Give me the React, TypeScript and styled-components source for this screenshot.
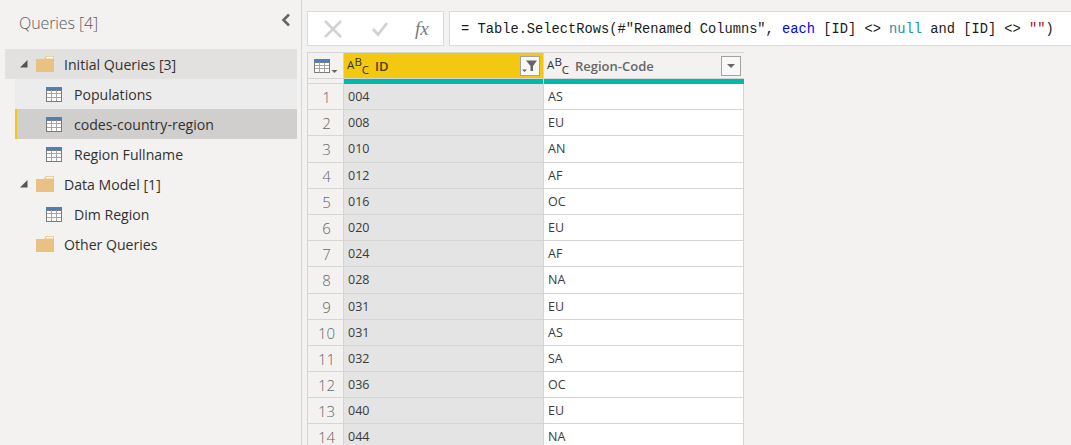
import React from "react";
import styled, { createGlobalStyle } from "styled-components";

const Global = createGlobalStyle`
  html, body { margin: 0; padding: 0; height: 445px; overflow: hidden; background: #f3f2f1; }
  * { box-sizing: border-box; }
`;
const UI = `"Open Sans", "Noto Sans", sans-serif`;
const COLS = "36px 200px 200px";

const Page = styled.div`
  display: flex; width: 1071px; height: 445px; overflow: hidden;
  background: #f3f2f1; font-family: ${UI}; color: #323130;
`;
const Sidebar = styled.aside`
  width: 302px; flex: none; border-right: 1px solid #d6d5d4; padding: 0 4px 0 5px;
`;
const SideHead = styled.div`
  height: 49px; display: flex; justify-content: space-between; padding: 12px 6px 0 14px;
`;
const SideTitle = styled.div`
  font-size: 16px; line-height: 22px; font-weight: 300; color: #605e5c; letter-spacing: -0.1px;
`;
const Row = styled.div<{ $child?: boolean; $tone?: "group" | "hover" | "selected" }>`
  height: 30px; display: flex; align-items: center; position: relative;
  margin-left: ${p => (p.$child ? "10px" : "0")};
  padding-left: ${p => (p.$child ? "31px" : "14px")};
  background: ${p =>
    p.$tone === "group" ? "#e2e1e0" : p.$tone === "hover" ? "#edecec" : p.$tone === "selected" ? "#d0cfce" : "transparent"};
  border-left: ${p => (p.$tone === "selected" ? "2px solid #f2c811" : "0")};
  ${p => p.$tone === "selected" && "padding-left: 29px;"}
`;
const Caret = styled.svg`width: 8px; height: 8px; flex: none; margin: 0 8px 0 1px;`;
const CaretGap = styled.span`width: 17px; flex: none;`;
const RowLabel = styled.span<{ $child?: boolean }>`
  font-size: 14.1px; line-height: 18px; white-space: nowrap; color: #323130; padding-top: 1px;
  margin-left: ${p => (p.$child ? "12px" : "10px")};
`;
const Main = styled.main`
  flex: 1; min-width: 0; padding: 11px 0 0 5px; display: flex; flex-direction: column; gap: 6px;
`;
const FormulaRow = styled.div`display: flex; gap: 5px; height: 35px; flex: none;`;
const Tools = styled.div`
  width: 137px; flex: none; background: #fff; border: 1px solid #dcdbda;
  display: flex; align-items: center; padding-left: 15px;
`;
const ToolSlot = styled.span<{ $w: number }>`width: ${p => p.$w}px; display: flex; align-items: center;`;
const Fx = styled.span`
  font-family: "Liberation Serif", serif; font-style: italic; font-size: 19px; color: #7a7a7a; line-height: 1;
`;
const Formula = styled.div`
  flex: 1; background: #fff; border: solid #dcdbda; border-width: 1px 0 1px 1px; padding-left: 11px;
  font-family: "Liberation Mono", monospace; font-size: 13.72px; line-height: 35px; height: 35px;
  white-space: pre; color: #1b1b1b;
`;
const Kw = styled.span<{ $c: string }>`color: ${p => p.$c};`;
const Table = styled.div`
  width: 437px; display: flex; flex-direction: column; border-left: 1px solid #d6d5d4;
`;
const Header = styled.div`
  height: 32px; flex: none; display: grid; grid-template-columns: ${COLS};
  border-top: 1px solid #d6d5d4; border-right: 1px solid #d6d5d4;
`;
const HeadCorner = styled.div`
  border-right: 1px solid #d6d5d4; height: 31px; padding: 5px 0 0 6px; border-bottom: 1px solid #d6d5d4;
  background: linear-gradient(#f3f2f1 25px, #d6d5d4 25px, #d6d5d4 26px, #f3f2f1 26px);
`;
const HeadCell = styled.div<{ $active?: boolean }>`
  height: 31px; display: flex; flex-direction: column;
  background: ${p => (p.$active ? "#f2c811" : "#f3f2f1")};
  border-right: ${p => (p.$active ? "1px solid #d6d5d4" : "0")};
`;
const HeadBody = styled.div`
  height: 26px; flex: none; display: flex; align-items: center; padding: 0 3px;
  border-bottom: 1px solid #d6d5d4;
`;
const Teal = styled.div`height: 5px; background: #01b8aa;`;
const Abc = styled.span`
  width: 28px; flex: none; height: 20px; font-size: 11.5px; line-height: 1; display: flex; font-weight: 400;
`;
const Letter = styled.span<{ $o: number; $w: number }>`
  display: block; transform: translateY(${p => p.$o}px); width: ${p => p.$w}px;
`;
const HeadLabel = styled.span<{ $active?: boolean }>`
  flex: 1; font-size: 13px; font-weight: 600; white-space: nowrap;
  color: ${p => (p.$active ? "#4c4318" : "#666")};
`;
const HeadButton = styled.span`
  width: 20px; height: 20px; flex: none; background: #f8f8f8; border: 1px solid #a3a3a3;
  display: flex; align-items: center; justify-content: center;
`;
const Grid = styled.div`
  display: grid; grid-template-columns: ${COLS}; grid-auto-rows: 26.2px;
`;
const Index = styled.div`
  background: #f3f2f1; border-right: 1px solid #d6d5d4; border-bottom: 1px solid #d6d5d4;
  font-size: 15px; font-weight: 300; color: #666; text-align: center; line-height: 27px;
  padding-left: 2px;
`;
const Cell = styled.div<{ $key?: boolean }>`
  background: ${p => (p.$key ? "#e4e4e4" : "#fff")};
  border-right: 1px solid #d6d5d4; border-bottom: 1px solid #d6d5d4;
  padding-left: 4px; font-size: 12.5px; line-height: 26px; color: #3a3a3a;
`;

const Folder = () => (
  <svg width="18" height="16" viewBox="0 0 18 16">
    <path d="M0 3h8l2-3h8v16H0z" fill="#e8c283" />
    <path d="M9.5 2.5l1.3-1.8h6.4v1.8z" fill="#fff" />
  </svg>
);
const TableIcon = () => (
  <svg width="16" height="15" viewBox="0 0 16 15">
    <rect x="0" y="0" width="16" height="15" fill="#7a7a7a" />
    <rect x="0" y="0" width="16" height="3" fill="#4a80bd" />
    <rect x="1" y="4" width="14" height="10" fill="#fff" />
    <path d="M5.5 3.5v10.5M10.5 3.5v10.5M1 6.5h14M1 10.5h14" stroke="#a5a5a5" strokeWidth="1" />
  </svg>
);
const Down = () => (
  <Caret viewBox="0 0 8 8"><path d="M0 7.5L7.5 0v7.5z" fill="#555" /></Caret>
);
const AbcIcon = () => (
  <Abc><Letter $o={3} $w={7.5}>A</Letter><Letter $o={0} $w={7.2}>B</Letter><Letter $o={8} $w={8}>C</Letter></Abc>
);

const rows: [string, string][] = [
  ["004", "AS"], ["008", "EU"], ["010", "AN"], ["012", "AF"], ["016", "OC"], ["020", "EU"], ["024", "AF"],
  ["028", "NA"], ["031", "EU"], ["031", "AS"], ["032", "SA"], ["036", "OC"], ["040", "EU"], ["044", "NA"],
];

export default function App() {
  return (
    <Page>
      <Global />
      <Sidebar>
        <SideHead>
          <SideTitle>Queries [4]</SideTitle>
          <svg width="10" height="14" viewBox="0 0 10 14" style={{ marginTop: 1 }}>
            <path d="M8 1.5L2.5 7 8 12.5" fill="none" stroke="#666" strokeWidth="2.6" />
          </svg>
        </SideHead>
        <Row $tone="group"><Down /><Folder /><RowLabel>Initial Queries [3]</RowLabel></Row>
        <Row $child $tone="hover"><TableIcon /><RowLabel $child>Populations</RowLabel></Row>
        <Row $child $tone="selected"><TableIcon /><RowLabel $child>codes-country-region</RowLabel></Row>
        <Row $child><TableIcon /><RowLabel $child>Region Fullname</RowLabel></Row>
        <Row><Down /><Folder /><RowLabel>Data Model [1]</RowLabel></Row>
        <Row $child><TableIcon /><RowLabel $child>Dim Region</RowLabel></Row>
        <Row><CaretGap /><Folder /><RowLabel>Other Queries</RowLabel></Row>
      </Sidebar>
      <Main>
        <FormulaRow>
          <Tools>
            <ToolSlot $w={48}>
              <svg width="20" height="20" viewBox="0 0 20 20"><path d="M2 2l16 16M18 2L2 18" stroke="#d2d2d2" strokeWidth="2.6" /></svg>
            </ToolSlot>
            <ToolSlot $w={44}>
              <svg width="18" height="16" viewBox="0 0 18 16"><path d="M2 8l5 5.5L16 2" fill="none" stroke="#d2d2d2" strokeWidth="2.8" /></svg>
            </ToolSlot>
            <Fx>fx</Fx>
          </Tools>
          <Formula>
            {`= Table.SelectRows(#"Renamed Columns", `}
            <Kw $c="#0000ff">each</Kw>
            {" [ID] <> "}
            <Kw $c="#1a93a8">null</Kw>
            {" and [ID] <> "}
            <Kw $c="#a31515">""</Kw>
            {")"}
          </Formula>
        </FormulaRow>
        <Table>
          <Header>
            <HeadCorner>
              <svg width="24" height="16" viewBox="0 0 24 16">
                <rect x="0" y="0" width="16" height="14" fill="#7a7a7a" />
                <rect x="0" y="0" width="16" height="3" fill="#4a80bd" />
                <rect x="1" y="4" width="14" height="9" fill="#fff" />
                <path d="M5.5 3.5v10M10.5 3.5v10M1 6.5h14M1 9.5h14" stroke="#a5a5a5" />
                <path d="M17.5 11h6l-3 3z" fill="#666" />
              </svg>
            </HeadCorner>
            <HeadCell $active>
              <HeadBody>
                <AbcIcon />
                <HeadLabel $active>ID</HeadLabel>
                <HeadButton>
                  <svg width="16" height="14" viewBox="0 0 16 14">
                    <path d="M4 1.5h11L11 7v5H8.5V7z" fill="#666" />
                    <path d="M0 10.5h5l-2.5 2.5z" fill="#666" />
                  </svg>
                </HeadButton>
              </HeadBody>
              <Teal />
            </HeadCell>
            <HeadCell>
              <HeadBody>
                <AbcIcon />
                <HeadLabel>Region-Code</HeadLabel>
                <HeadButton>
                  <svg width="10" height="6" viewBox="0 0 10 6"><path d="M1 1h8L5 5z" fill="#666" /></svg>
                </HeadButton>
              </HeadBody>
              <Teal />
            </HeadCell>
          </Header>
          <Grid>
            {rows.map(([id, region], i) => (
              <React.Fragment key={i}>
                <Index>{i + 1}</Index>
                <Cell $key>{id}</Cell>
                <Cell>{region}</Cell>
              </React.Fragment>
            ))}
          </Grid>
        </Table>
      </Main>
    </Page>
  );
}
